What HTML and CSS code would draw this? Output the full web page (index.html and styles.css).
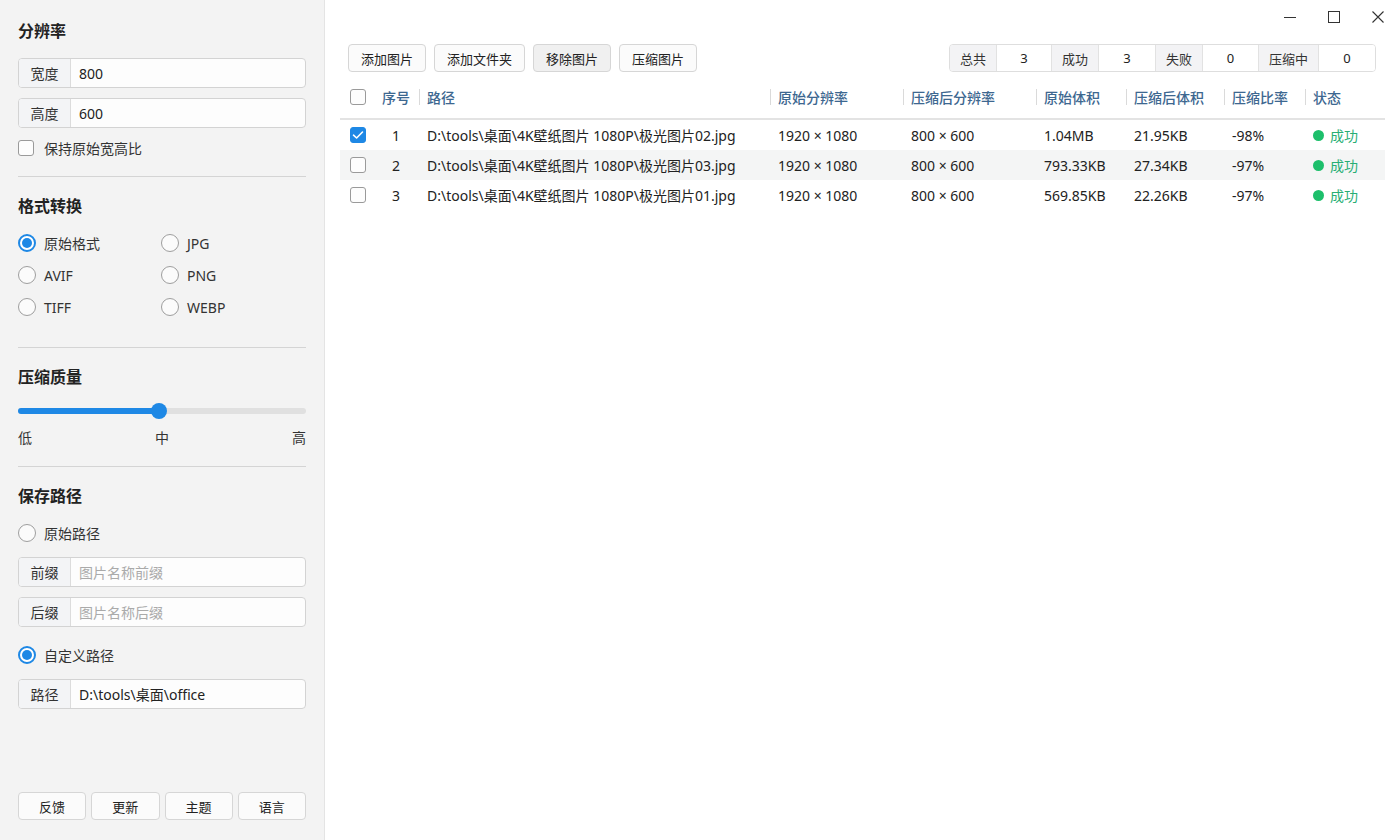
FILE: index.html
```html
<!DOCTYPE html>
<html lang="zh-CN">
<head>
<meta charset="utf-8">
<title>图片压缩</title>
<link rel="stylesheet" href="styles.css">
</head>
<body>
<div class="app">
  <aside class="sidebar">
    <div class="title first">分辨率</div>
    <div class="field mt16"><span class="field-label">宽度</span><span class="field-value">800</span></div>
    <div class="field mt10"><span class="field-label">高度</span><span class="field-value">600</span></div>
    <label class="check-row"><span class="checkbox"></span><span>保持原始宽高比</span></label>
    <div class="divider d1"></div>

    <div class="title">格式转换</div>
    <div class="radio-grid">
      <div class="radio-row"><span class="radio on"></span><span>原始格式</span></div>
      <div class="radio-row"><span class="radio"></span><span>JPG</span></div>
      <div class="radio-row"><span class="radio"></span><span>AVIF</span></div>
      <div class="radio-row"><span class="radio"></span><span>PNG</span></div>
      <div class="radio-row"><span class="radio"></span><span>TIFF</span></div>
      <div class="radio-row"><span class="radio"></span><span>WEBP</span></div>
    </div>
    <div class="divider d2"></div>

    <div class="title">压缩质量</div>
    <div class="slider">
      <div class="track"><div class="fill"></div></div>
      <div class="thumb"></div>
    </div>
    <div class="slider-labels"><span>低</span><span>中</span><span>高</span></div>
    <div class="divider d1"></div>

    <div class="title">保存路径</div>
    <div class="radio-row single"><span class="radio"></span><span>原始路径</span></div>
    <div class="field mt8"><span class="field-label">前缀</span><span class="field-value placeholder">图片名称前缀</span></div>
    <div class="field mt10"><span class="field-label">后缀</span><span class="field-value placeholder">图片名称后缀</span></div>
    <div class="radio-row single mt12"><span class="radio on"></span><span>自定义路径</span></div>
    <div class="field mt8"><span class="field-label">路径</span><span class="field-value">D:\tools\桌面\office</span></div>

    <div class="bottom-buttons">
      <button class="btn">反馈</button>
      <button class="btn">更新</button>
      <button class="btn">主题</button>
      <button class="btn">语言</button>
    </div>
  </aside>

  <main class="main">
    <div class="titlebar">
      <span class="win-btn"><svg width="14" height="14" viewBox="0 0 14 14"><line x1="1" y1="7.5" x2="13" y2="7.5" stroke="#333" stroke-width="1"/></svg></span>
      <span class="win-btn"><svg width="14" height="14" viewBox="0 0 14 14"><rect x="1.5" y="1.5" width="11" height="11" fill="none" stroke="#333" stroke-width="1"/></svg></span>
      <span class="win-btn"><svg width="14" height="14" viewBox="0 0 14 14"><path d="M1.5 1.5 L12.5 12.5 M12.5 1.5 L1.5 12.5" stroke="#333" stroke-width="1.1" fill="none"/></svg></span>
    </div>

    <div class="toolbar">
      <div class="actions">
        <button class="btn tb">添加图片</button>
        <button class="btn tb">添加文件夹</button>
        <button class="btn tb hover">移除图片</button>
        <button class="btn tb">压缩图片</button>
      </div>
      <div class="stats">
        <span class="s-label w47">总共</span><span class="s-value w55">3</span>
        <span class="s-label w47">成功</span><span class="s-value w57">3</span>
        <span class="s-label w47">失败</span><span class="s-value w56">0</span>
        <span class="s-label w60">压缩中</span><span class="s-value w56">0</span>
      </div>
    </div>

    <div class="table">
      <div class="thead">
        <div class="cell cb"><span class="checkbox"></span></div>
        <div class="cell num">序号</div>
        <div class="cell sep">路径</div>
        <div class="cell sep">原始分辨率</div>
        <div class="cell sep">压缩后分辨率</div>
        <div class="cell sep">原始体积</div>
        <div class="cell sep">压缩后体积</div>
        <div class="cell sep">压缩比率</div>
        <div class="cell sep">状态</div>
      </div>
      <div class="trow">
        <div class="cell cb"><span class="checkbox checked"><svg width="12" height="10" viewBox="0 0 12 10"><path d="M1.5 5.2 L4.6 8 L10.5 2" stroke="#fff" stroke-width="1.6" fill="none" stroke-linecap="round" stroke-linejoin="round"/></svg></span></div>
        <div class="cell num">1</div>
        <div class="cell">D:\tools\桌面\4K壁纸图片 1080P\极光图片02.jpg</div>
        <div class="cell">1920 × 1080</div>
        <div class="cell">800 × 600</div>
        <div class="cell">1.04MB</div>
        <div class="cell">21.95KB</div>
        <div class="cell">-98%</div>
        <div class="cell status"><span class="dot"></span>成功</div>
      </div>
      <div class="trow alt">
        <div class="cell cb"><span class="checkbox"></span></div>
        <div class="cell num">2</div>
        <div class="cell">D:\tools\桌面\4K壁纸图片 1080P\极光图片03.jpg</div>
        <div class="cell">1920 × 1080</div>
        <div class="cell">800 × 600</div>
        <div class="cell">793.33KB</div>
        <div class="cell">27.34KB</div>
        <div class="cell">-97%</div>
        <div class="cell status"><span class="dot"></span>成功</div>
      </div>
      <div class="trow">
        <div class="cell cb"><span class="checkbox"></span></div>
        <div class="cell num">3</div>
        <div class="cell">D:\tools\桌面\4K壁纸图片 1080P\极光图片01.jpg</div>
        <div class="cell">1920 × 1080</div>
        <div class="cell">800 × 600</div>
        <div class="cell">569.85KB</div>
        <div class="cell">22.26KB</div>
        <div class="cell">-97%</div>
        <div class="cell status"><span class="dot"></span>成功</div>
      </div>
    </div>
  </main>
</div>
</body>
</html>
```

FILE: styles.css
```css
* { box-sizing: border-box; }
html, body { margin: 0; padding: 0; }
body {
  width: 1400px;
  height: 840px;
  overflow: hidden;
  font-family: "Noto Sans", "Noto Sans CJK SC", sans-serif;
  font-size: 14px;
  color: #222;
  background: #fff;
}
.app { display: flex; height: 840px; }

/* Sidebar */
.sidebar {
  width: 325px;
  flex: none;
  background: #f3f3f3;
  border-right: 1px solid #e4e4e4;
  padding: 20px 18px 20px 18px;
  display: flex;
  flex-direction: column;
}
.title {
  font-size: 16px;
  font-weight: 700;
  line-height: 22px;
  height: 22px;
  margin-top: 18px;
  color: #222;
}
.title.first { margin-top: 0; }
.mt16 { margin-top: 16px; }
.mt10 { margin-top: 10px; }
.mt8 { margin-top: 8px; }
.mt12 { margin-top: 12px; }

.field {
  display: flex;
  height: 30px;
  border: 1px solid #d3d3d3;
  border-radius: 4px;
  background: #fdfdfd;
  overflow: hidden;
}
.field-label {
  width: 52px;
  flex: none;
  background: #f3f4f6;
  border-right: 1px solid #dcdcdc;
  display: flex;
  align-items: center;
  justify-content: center;
  color: #333;
}
.field-value {
  flex: 1;
  display: flex;
  align-items: center;
  padding-left: 8px;
  color: #222;
}
.field-value.placeholder { color: #aaa; }

.check-row {
  display: flex;
  align-items: center;
  gap: 10px;
  height: 20px;
  margin-top: 10px;
  color: #333;
}
.checkbox {
  width: 16px;
  height: 16px;
  border: 1px solid #9a9a9a;
  border-radius: 3px;
  background: #fdfdfd;
  display: inline-flex;
  align-items: center;
  justify-content: center;
  flex: none;
}
.checkbox.checked { background: #1e88e5; border-color: #1e88e5; }

.divider { height: 1px; background: #d4d4d4; }
.d1 { margin-top: 18px; }
.d2 { margin-top: 24px; }

.radio-grid {
  display: grid;
  grid-template-columns: 143px 1fr;
  margin-top: 10px;
}
.radio-row {
  display: flex;
  align-items: center;
  gap: 8px;
  height: 32px;
  color: #333;
}
.radio-row.single { margin-top: 10px; }
.radio-row.single.mt12 { margin-top: 12px; }
.radio {
  width: 18px;
  height: 18px;
  border-radius: 50%;
  border: 1px solid #9e9e9e;
  background: #fbfbfb;
  flex: none;
  position: relative;
}
.radio.on {
  border: 2px solid #1e88e5;
  background: #fff;
}
.radio.on::after {
  content: "";
  position: absolute;
  left: 2px; top: 2px;
  width: 10px; height: 10px;
  border-radius: 50%;
  background: #1e88e5;
}

.slider {
  position: relative;
  height: 22px;
  margin-top: 12px;
  display: flex;
  align-items: center;
}
.track {
  width: 100%;
  height: 6px;
  border-radius: 3px;
  background: #e0e0e0;
  overflow: hidden;
}
.fill { width: 141px; height: 100%; background: #1e88e5; }
.thumb {
  position: absolute;
  left: 133px;
  top: 3px;
  width: 16px;
  height: 16px;
  border-radius: 50%;
  background: #1e88e5;
}
.slider-labels {
  display: flex;
  justify-content: space-between;
  margin-top: 6px;
  line-height: 20px;
  color: #333;
}

.bottom-buttons {
  margin-top: auto;
  display: grid;
  grid-template-columns: repeat(4, 1fr);
  gap: 5px;
}
.btn {
  height: 28px;
  border: 1px solid #d6d6d6;
  border-radius: 4px;
  background: #fbfbfb;
  font-family: inherit;
  font-size: 13px;
  color: #222;
  padding: 0;
}

/* Main */
.main {
  flex: 1;
  display: flex;
  flex-direction: column;
  padding: 0 15px;
}
.titlebar {
  height: 44px;
  display: flex;
  justify-content: flex-end;
  align-items: flex-start;
  gap: 30px;
  padding-top: 10px;
  margin-right: -15px;
  padding-right: 15px;
}
.win-btn { width: 14px; height: 14px; display: flex; }

.toolbar {
  display: flex;
  justify-content: space-between;
  align-items: center;
  padding: 0 9px 0 8px;
  height: 28px;
}
.actions { display: flex; gap: 8px; }
.btn.tb { padding: 0 12px; }
.btn.tb.hover { background: #f0f0f0; }

.stats {
  display: flex;
  height: 28px;
  border: 1px solid #dedede;
  border-radius: 4px;
  overflow: hidden;
  font-size: 13px;
}
.s-label, .s-value {
  display: flex;
  align-items: center;
  justify-content: center;
  border-right: 1px solid #e2e2e2;
}
.s-value:last-child { border-right: none; }
.s-label { background: #f3f3f5; color: #333; }
.s-value { background: #fff; color: #222; }
.w47 { width: 47px; }
.w55 { width: 55px; }
.w56 { width: 56px; }
.w57 { width: 57px; }
.w60 { width: 60px; }

.table { margin-top: 10px; }
.thead, .trow {
  display: grid;
  grid-template-columns: 33px 46px 351px 133px 133px 90px 98px 81px 80px;
}
.thead {
  height: 38px;
  padding-bottom: 8px;
  border-bottom: 2px solid #e3e3e3;
  color: #3d6790;
  font-weight: 500;
}
.thead .cell { height: 30px; }
.trow { height: 30px; color: #222; }
.trow.alt { background: #f4f5f5; }
.cell {
  display: flex;
  align-items: center;
  padding-left: 8px;
  white-space: nowrap;
  position: relative;
}
.cell.cb { padding-left: 10px; }
.cell.num { justify-content: center; padding-left: 0; }
.thead .cell.sep::before {
  content: "";
  position: absolute;
  left: 0;
  top: 7px;
  width: 1px;
  height: 16px;
  background: #dadada;
}
.status { color: #27ae74; gap: 6px; }
.dot {
  width: 11px;
  height: 11px;
  border-radius: 50%;
  background: #1dbf6b;
  display: inline-block;
}
```
